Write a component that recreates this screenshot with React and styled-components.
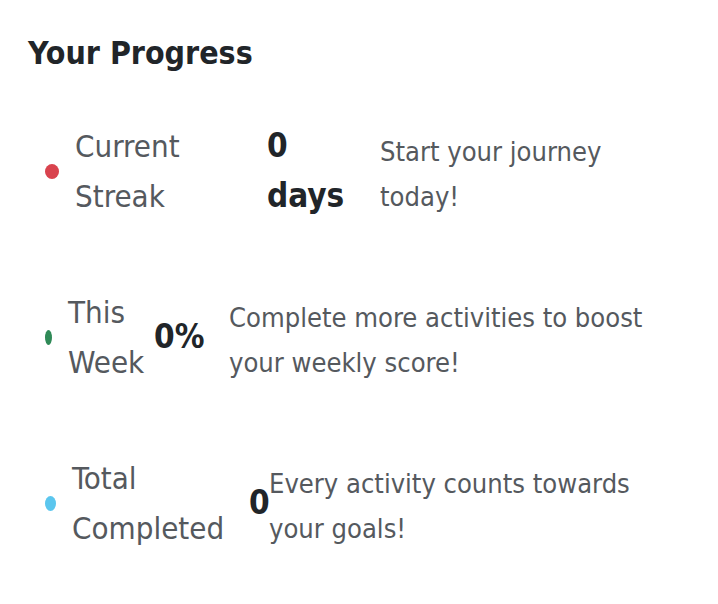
import React from "react";
import styled, { createGlobalStyle } from "styled-components";

const stats = [
  {
    id: "streak",
    color: "#d9434e",
    label: "Current Streak",
    value: "0 days",
    note: "Start your journey today!",
    dot: 14,
    cols: "176px 97px 1fr",
  },
  {
    id: "week",
    color: "#2f8a57",
    label: "This Week",
    value: "0%",
    note: "Complete more activities to boost your weekly score!",
    dot: 7,
    cols: "70px 59px 1fr",
  },
  {
    id: "total",
    color: "#5bc6ee",
    label: "Total Completed",
    value: "0",
    note: "Every activity counts towards your goals!",
    dot: 11,
    cols: "161px 4px 1fr",
  },
];

const ProgressCard = () => {
  return (
    <Card>
      <Title>Your Progress</Title>
      <StatList>
        {stats.map((item) => (
          <StatRow key={item.id} $cols={item.cols}>
            <Dot $color={item.color} $size={item.dot} />
            <Label>{item.label}</Label>
            <Value>{item.value}</Value>
            <Note>{item.note}</Note>
          </StatRow>
        ))}
      </StatList>
    </Card>
  );
};

const GlobalStyle = createGlobalStyle`
  body {
    margin: 0;
    background: #ffffff;
  }
`;

const Card = styled.div`
  width: 718px;
  box-sizing: border-box;
  padding: 36px 38px 0 28px;
  font-family: "DejaVu Sans Condensed", "DejaVu Sans", sans-serif;
  font-stretch: condensed;
`;

const Title = styled.h2`
  margin: 0;
  font-size: 31.8px;
  line-height: 34px;
  font-weight: 700;
  color: #212529;
`;

const StatList = styled.ul`
  list-style: none;
  margin: 51px 0 0;
  padding: 0 0 0 17px;
  display: flex;
  flex-direction: column;
  gap: 66px;
`;

const StatRow = styled.li`
  display: grid;
  grid-template-columns: ${(p) => `auto ${p.$cols}`};
  align-items: center;
  column-gap: 16px;
`;

const Dot = styled.span`
  display: block;
  width: ${(p) => p.$size}px;
  height: 15px;
  border-radius: 50%;
  background: ${(p) => p.$color};
`;

const Label = styled.div`
  font-size: 31px;
  line-height: 50px;
  color: #55595e;
`;

const Value = styled.div`
  width: min-content;
  font-size: 33px;
  line-height: 50px;
  font-weight: 700;
  color: #212529;
`;

const Note = styled.div`
  margin-top: 6px;
  font-size: 27.1px;
  line-height: 45px;
  color: #55595e;
`;

const App = () => (
  <>
    <GlobalStyle />
    <ProgressCard />
  </>
);

export default App;
